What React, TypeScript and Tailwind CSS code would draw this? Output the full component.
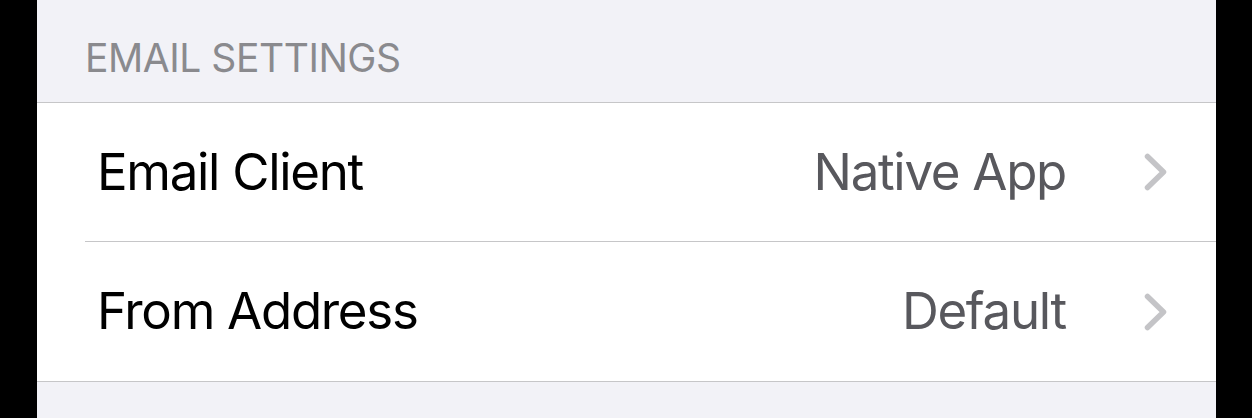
const rows = [
  { label: 'Email Client', value: 'Native App' },
  { label: 'From Address', value: 'Default' },
]

function Chevron() {
  return (
    <svg className="h-[38px] w-[23px]" viewBox="0 0 23 38" fill="none" stroke="#c4c4c7" strokeWidth={5.5} strokeLinecap="round" strokeLinejoin="round">
      <path d="M3.5 3.5L19.5 19L3.5 34.5" />
    </svg>
  )
}

export default function App() {
  return (
    <div className="flex h-[418px] w-[1252px] bg-black" style={{ fontFamily: 'Inter, "Noto Sans", sans-serif' }}>
      <div className="w-[37px] bg-black" />
      <div className="flex-1 bg-[#f2f2f7]">
        <div className="flex h-[102px] items-end pb-[25px] pl-[48px]">
          <span className="text-[39px] leading-none tracking-[-0.45px] text-[#8a8a8e]">EMAIL SETTINGS</span>
        </div>
        <div className="border-y border-[#c6c6c8] bg-white">
          {rows.map((row, i) => (
            <div key={row.label}>
              {i > 0 && <div className="ml-[48px] h-px bg-[#c6c6c8]" />}
              <div className={`flex items-center pl-[60px] pr-[49px] text-[51px] tracking-[-1.3px] ${i === 0 ? 'h-[138px]' : 'h-[139px]'}`}>
                <span className="text-black">{row.label}</span>
                <span className="ml-auto mr-[78px] text-[#58585d]">{row.value}</span>
                <Chevron />
              </div>
            </div>
          ))}
        </div>
      </div>
      <div className="w-[36px] bg-black" />
    </div>
  )
}
